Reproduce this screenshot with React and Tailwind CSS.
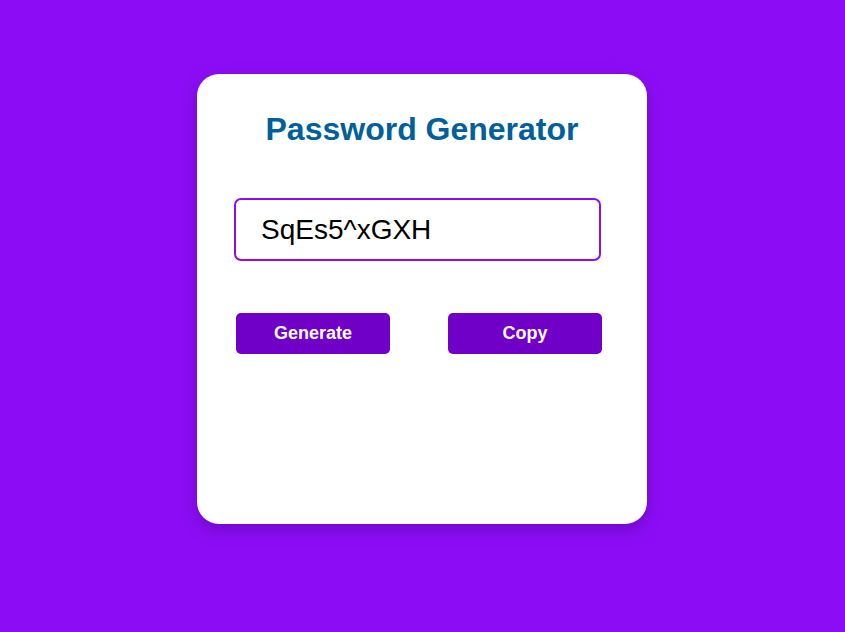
import React, { useState } from 'react';

const chars = 'ABCDEFGHIJKLMNOPQRSTUVWXYZabcdefghijklmnopqrstuvwxyz0123456789!@#$%^&*';

const App = () => {
  const [password, setPassword] = useState('SqEs5^xGXH');

  const generate = () => {
    let out = '';
    for (let i = 0; i < 10; i++) out += chars[Math.floor(Math.random() * chars.length)];
    setPassword(out);
  };

  const copy = () => {
    if (navigator.clipboard) navigator.clipboard.writeText(password).catch(() => {});
  };

  return (
    <div className="min-h-screen bg-[#8c0df5] pt-[74px] font-['Liberation_Sans',Arial,sans-serif]">
      <div className="ml-[197px] w-[450px] h-[450px] bg-white rounded-[22px] shadow-[0_6px_16px_rgba(60,0,120,0.35)] pt-[38px]">
        <h1 className="text-center text-[32px] leading-[34px] font-bold text-[#005f9c]">Password Generator</h1>
        <div className="pl-[37px] mt-[52px]">
          <input
            type="text"
            readOnly
            value={password}
            className="w-[367px] h-[63px] border-2 border-[#8c0df5] rounded-[7px] pl-[25px] text-[28px] text-black outline-none"
          />
          <div className="flex gap-[58px] mt-[52px] pl-[2px]">
            <button onClick={generate} className="w-[154px] h-[41px] bg-[#7000c8] text-white text-[18px] font-bold rounded-[5px]">
              Generate
            </button>
            <button onClick={copy} className="w-[154px] h-[41px] bg-[#7000c8] text-white text-[18px] font-bold rounded-[5px]">
              Copy
            </button>
          </div>
        </div>
      </div>
    </div>
  );
};

export default App;
